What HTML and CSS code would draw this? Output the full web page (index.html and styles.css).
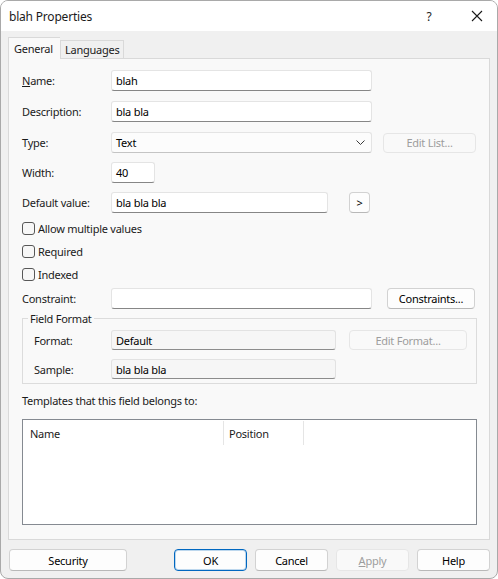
FILE: index.html
```html
<!DOCTYPE html>
<html>
<head>
	<title>blah Properties</title>
	<link rel="stylesheet" href="styles.css">
</head>
<body>
	<div class="window">

		<div class="titlebar">
			<span class="title">blah Properties</span>
			<span class="help">?</span>
			<span class="close">
				<svg width="12" height="12" viewBox="0 0 12 12"><path d="M1 1 L11 11 M11 1 L1 11" stroke="#1a1a1a" stroke-width="1.1" fill="none"/></svg>
			</span>
		</div>

		<div class="dialog">
			<div class="tabs">
				<div class="tab active">General</div>
				<div class="tab">Languages</div>
			</div>

			<div class="page">
				<div class="row r-name">
					<span class="lbl"><u>N</u>ame:</span>
					<div class="edit w-long">blah</div>
				</div>
				<div class="row r-desc">
					<span class="lbl">Description:</span>
					<div class="edit w-long">bla bla</div>
				</div>
				<div class="row r-type">
					<span class="lbl">Type:</span>
					<div class="combo w-long">
						<span>Text</span>
						<svg width="9" height="5" viewBox="0 0 9 5"><path d="M0.5 0.5 L4.5 4.5 L8.5 0.5" stroke="#3a3a3a" stroke-width="1" fill="none"/></svg>
					</div>
					<div class="btn disabled b-editlist">Edit List...</div>
				</div>
				<div class="row r-width">
					<span class="lbl">Width:</span>
					<div class="edit w-num">40</div>
				</div>
				<div class="row r-default">
					<span class="lbl">Default value:</span>
					<div class="edit w-default">bla bla bla</div>
					<div class="btn b-more">&gt;</div>
				</div>

				<div class="check first"><span class="box"></span>Allow multiple values</div>
				<div class="check"><span class="box"></span>Required</div>
				<div class="check"><span class="box"></span>Indexed</div>

				<div class="row r-constraint">
					<span class="lbl">Constraint:</span>
					<div class="edit w-long"></div>
					<div class="btn b-constraints">Constraints...</div>
				</div>

				<fieldset class="group">
					<legend>Field Format</legend>
					<div class="grow g-format">
						<span class="glbl">Format:</span>
						<div class="edit readonly w-format">Default</div>
						<div class="btn disabled b-editformat">Edit Format...</div>
					</div>
					<div class="grow g-sample">
						<span class="glbl">Sample:</span>
						<div class="edit readonly w-format">bla bla bla</div>
					</div>
				</fieldset>

				<div class="caption">Templates that this field belongs to:</div>

				<div class="list">
					<div class="listhead">
						<div class="col c-name">Name</div>
						<div class="col c-pos">Position</div>
					</div>
				</div>
			</div>

			<div class="buttons">
				<div class="btn b-security">Security</div>
				<div class="btn default b-ok">OK</div>
				<div class="btn b-cancel">Cancel</div>
				<div class="btn disabled b-apply"><u>A</u>pply</div>
				<div class="btn b-help">Help</div>
			</div>
		</div>
	</div>
</body>
</html>
```

FILE: styles.css
```css
html, body{
	margin: 0;
	padding: 0;
	background: #ffffff;
}
body{
	font-family: "Noto Sans", "Open Sans", sans-serif;
	font-size: 11px;
	letter-spacing: -0.25px;
	line-height: 15px;
	color: #1b1b1b;
}
.window{
	width: 498px;
	height: 579px;
	box-sizing: border-box;
	border: 1px solid #a9a9a9;
	border-radius: 8px;
	overflow: hidden;
	background: #f0f0f0;
}

.titlebar{
	height: 30px;
	background: #ffffff;
	display: flex;
	align-items: center;
}
.title{
	margin-left: 8px;
	flex: 1;
	font-size: 12px;
	letter-spacing: -0.2px;
}
.help{
	width: 12px;
	text-align: center;
	margin-right: 36px;
	font-size: 12px;
}
.close{
	width: 12px;
	height: 12px;
	margin-right: 14px;
	display: flex;
}

.dialog{
	padding: 7px 0 0 7px;
}

.tabs{
	display: flex;
	align-items: flex-end;
	height: 20px;
	position: relative;
	z-index: 1;
}
.tab{
	box-sizing: border-box;
	height: 18px;
	padding: 0 4px;
	border: 1px solid #d9d9d9;
	border-bottom: none;
	background: #f0f0f0;
	display: flex;
	align-items: center;
}
.tab.active{
	height: 22px;
	margin-bottom: -1px;
	width: 52px;
	padding: 0 5px;
	background: #f9f9f9;
	border-right: none;
}

.page{
	box-sizing: border-box;
	width: 482px;
	height: 482px;
	border: 1px solid #d9d9d9;
	background: #f9f9f9;
	padding: 0 12px 0 13px;
	display: flex;
	flex-direction: column;
}

.row{
	display: flex;
	align-items: center;
	height: 21px;
}
.r-name{ margin-top: 11px; }
.r-desc{ margin-top: 10px; }
.r-type{ margin-top: 10px; }
.r-width{ margin-top: 9px; }
.r-default{ margin-top: 9px; }
.r-constraint{ margin-top: 2px; }

.lbl{
	width: 89px;
	flex: none;
}

.edit, .combo{
	box-sizing: border-box;
	height: 21px;
	background: #ffffff;
	border: 1px solid #e4e4e4;
	border-bottom-color: #868686;
	border-radius: 3px;
	padding: 0 4px;
	display: flex;
	align-items: center;
	color: #000000;
}
.edit.readonly{
	height: 20px;
	background: #f6f6f6;
	border-color: #e2e2e2;
	border-bottom-color: #8c8c8c;
}
.combo{
	justify-content: space-between;
	background: #fcfcfc;
	border-bottom-color: #c4c4c4;
	padding-right: 6px;
}
.w-long{ width: 261px; }
.w-num{ width: 44px; }
.w-default{ width: 217px; }
.w-format{ width: 225px; }

.btn{
	box-sizing: border-box;
	height: 21px;
	background: #fdfdfd;
	border: 1px solid #d2d2d2;
	border-bottom-color: #b8b8b8;
	border-radius: 4px;
	display: flex;
	align-items: center;
	justify-content: center;
	color: #000000;
	flex: none;
}
.btn.disabled{
	background: #f9f9f9;
	border-color: #e6e6e6;
	color: #9d9d9d;
}
.btn.default{
	border: 1px solid #0067c0;
	box-shadow: inset 0 0 0 1px rgba(0, 103, 192, 0.25);
}
.b-editlist{
	width: 93px;
	height: 20px;
	margin-left: 11px;
}
.b-more{
	width: 21px;
	margin-left: 21px;
}
.b-constraints{
	width: 88px;
	margin-left: 15px;
}
.b-editformat{
	width: 118px;
	height: 20px;
	margin-left: 13px;
}

.check{
	display: flex;
	align-items: center;
	height: 23px;
}
.check.first{
	margin-top: 4px;
}
.box{
	box-sizing: border-box;
	width: 13px;
	height: 13px;
	border: 1px solid #575757;
	border-radius: 3px;
	background: #f7f7f7;
	margin-right: 3px;
}

.group{
	box-sizing: border-box;
	width: 455px;
	margin: 2px 0 0 0;
	padding: 0 0 4px 0;
	border: 1px solid #dcdcdc;
	min-width: 0;
}
.group legend{
	padding: 0 2px;
	margin-left: 5px;
	line-height: 15px;
}
.grow{
	display: flex;
	align-items: center;
	height: 20px;
	padding-left: 11px;
}
.g-format{ margin-top: 4px; }
.g-sample{ margin-top: 9px; }
.glbl{
	width: 77px;
	flex: none;
}

.caption{
	margin-top: 9px;
	height: 15px;
}

.list{
	box-sizing: border-box;
	margin-top: 11px;
	width: 455px;
	height: 106px;
	border: 1px solid #858a91;
	background: #ffffff;
}
.listhead{
	display: flex;
	height: 24px;
	margin-top: 1px;
}
.col{
	box-sizing: border-box;
	border-right: 1px solid #e5e5e5;
	display: flex;
	align-items: center;
	padding-left: 7px;
}
.c-name{ width: 201px; }
.c-pos{ width: 80px; padding-left: 5px; }

.buttons{
	display: flex;
	margin-top: 9px;
	padding-left: 1px;
}
.buttons .btn{
	height: 22px;
}
.b-security{ width: 118px; }
.b-ok{ width: 73px; margin-left: 47px; }
.b-cancel{ width: 73px; margin-left: 8px; }
.b-apply{ width: 73px; margin-left: 8px; }
.b-help{ width: 73px; margin-left: 8px; }
```
